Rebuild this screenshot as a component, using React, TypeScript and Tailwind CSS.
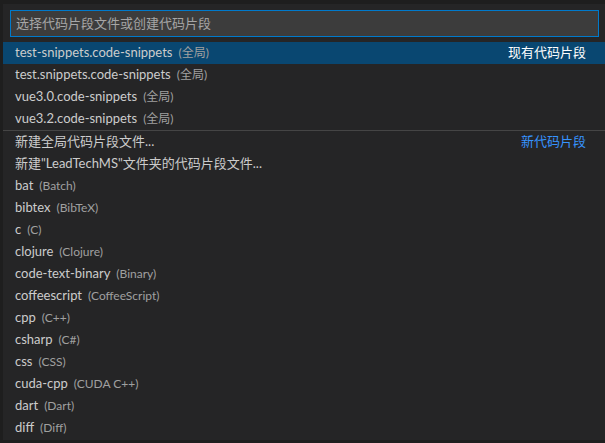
const FONT = '"Segoe UI", Lato, "Noto Sans CJK SC", sans-serif'

type Item = { label: string; description?: string; right?: string }

const existing: Item[] = [
  { label: 'test-snippets.code-snippets', description: '(全局)', right: '现有代码片段' },
  { label: 'test.snippets.code-snippets', description: '(全局)' },
  { label: 'vue3.0.code-snippets', description: '(全局)' },
  { label: 'vue3.2.code-snippets', description: '(全局)' },
]

const created: Item[] = [
  { label: '新建全局代码片段文件...', right: '新代码片段' },
  { label: '新建"LeadTechMS"文件夹的代码片段文件...' },
  { label: 'bat', description: '(Batch)' },
  { label: 'bibtex', description: '(BibTeX)' },
  { label: 'c', description: '(C)' },
  { label: 'clojure', description: '(Clojure)' },
  { label: 'code-text-binary', description: '(Binary)' },
  { label: 'coffeescript', description: '(CoffeeScript)' },
  { label: 'cpp', description: '(C++)' },
  { label: 'csharp', description: '(C#)' },
  { label: 'css', description: '(CSS)' },
  { label: 'cuda-cpp', description: '(CUDA C++)' },
  { label: 'dart', description: '(Dart)' },
  { label: 'diff', description: '(Diff)' },
]

function Row({ item, selected }: { item: Item; selected?: boolean }) {
  return (
    <div
      className={`flex h-[22px] items-center pl-[12px] pr-[27px] ${
        selected ? 'bg-[#094771]' : ''
      }`}
    >
      <span className="text-[13px] text-[#cccccc] whitespace-nowrap">
        {item.label}
      </span>
      {item.description && (
        <span className="ml-[6px] text-[12px] text-[#a0a0a0] whitespace-nowrap">
          {item.description}
        </span>
      )}
      {item.right && (
        <span
          className={`ml-auto text-[13px] whitespace-nowrap ${
            selected ? 'text-white' : 'text-[#3794ff]'
          }`}
        >
          {item.right}
        </span>
      )}
    </div>
  )
}

export default function App() {
  return (
    <div
      className="h-[443px] w-[605px] overflow-hidden bg-[#1e1e1e]"
      style={{ fontFamily: FONT }}
    >
      <div className="ml-[3px] mt-[4px] flex h-[436px] w-[610px] flex-col bg-[#252526]">
        <div className="pl-[7px] pr-[14px] pt-[6px]">
          <div className="flex h-[27px] w-[589px] items-center border border-[#007acc] bg-[#3c3c3c] px-[5px]">
            <span className="text-[13px] text-[#a6a6a6]">
              选择代码片段文件或创建代码片段
            </span>
          </div>
        </div>
        <div className="mt-[5px] flex flex-col">
          {existing.map((item, i) => (
            <Row key={item.label} item={item} selected={i === 0} />
          ))}
          <div className="border-t border-[#454545]">
            {created.map((item) => (
              <Row key={item.label} item={item} />
            ))}
          </div>
        </div>
      </div>
    </div>
  )
}
